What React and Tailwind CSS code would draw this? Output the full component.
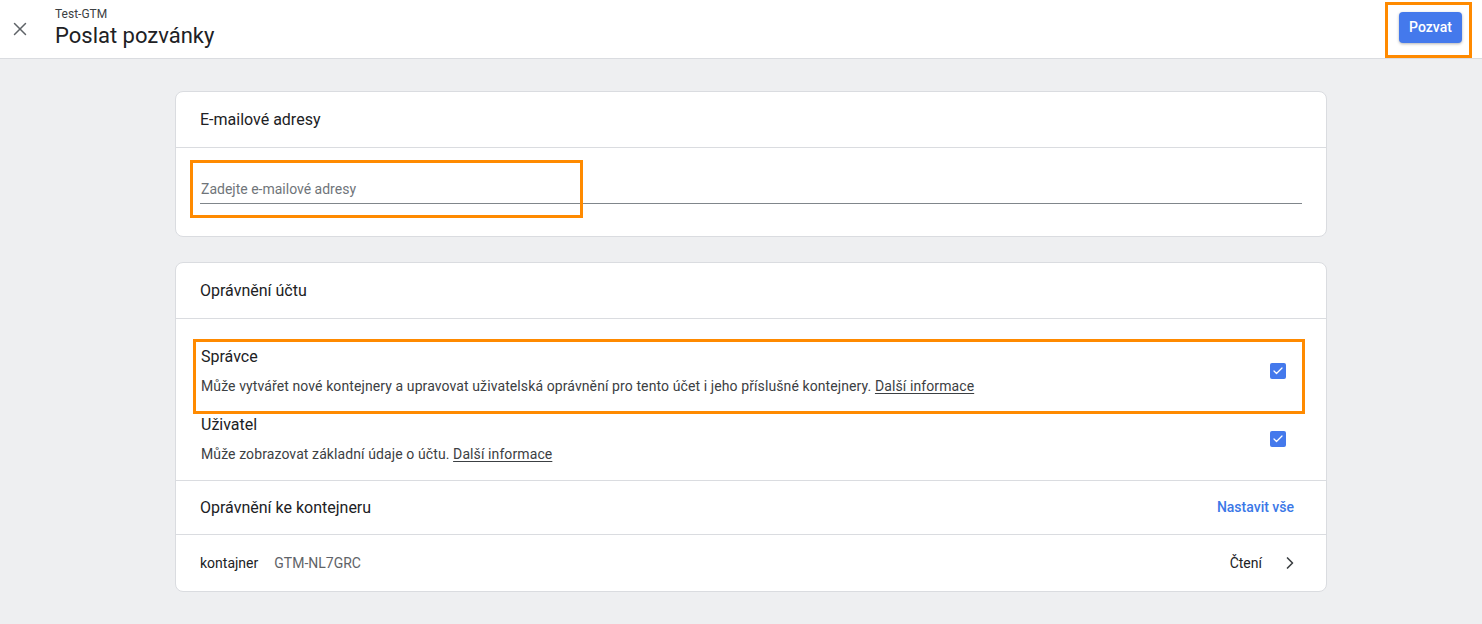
import { X, ChevronRight, Check } from "lucide-react";

const Checkbox = () => (
  <div className="w-4 h-4 rounded-[2px] bg-[#4479ec] flex items-center justify-center">
    <Check className="w-3 h-3 text-white" strokeWidth={2.5} />
  </div>
);

const Role = ({ title, desc, last }) => (
  <div className={`flex items-center pl-[25px] pr-[40px] ${last ? "pb-[16px]" : "pb-[17px]"}`}>
    <div className="flex-1">
      <div className="text-[16px] leading-6 text-[#202124]">{title}</div>
      <div className="mt-[7px] text-[14px] leading-5 text-[#3c4043] tracking-[0.1px]">
        {desc}{" "}
        <span className="underline underline-offset-2">Další informace</span>
      </div>
    </div>
    <Checkbox />
  </div>
);

const App = () => {
  return (
    <div
      className="relative w-[1482px] h-[624px] bg-[#eeeff1] overflow-hidden"
      style={{ fontFamily: "Roboto, 'Noto Sans', sans-serif" }}
    >
      {/* Header */}
      <div className="h-[59px] bg-white border-b border-[#dadce0] flex items-center pr-[20px]">
        <div className="w-[55px] flex justify-center">
          <X className="w-[22px] h-[22px] text-[#5f6368] ml-[-15px]" strokeWidth={1.6} />
        </div>
        <div className="flex-1 -mt-[2px]">
          <div className="text-[12px] leading-4 text-[#3c4043]">Test-GTM</div>
          <div className="text-[22px] leading-7 text-[#202124]">Poslat pozvánky</div>
        </div>
        <button className="h-[31px] w-[63px] rounded-[4px] bg-[#4479ec] text-white text-[14px] font-medium shadow-[0_1px_3px_rgba(0,0,0,0.3)] -mt-[4px]">
          Pozvat
        </button>
      </div>

      <div className="pt-[32px] pl-[175px]">
        {/* Email card */}
        <div className="w-[1152px] bg-white border border-[#dadce0] rounded-[8px]">
          <div className="h-[56px] flex items-center px-6 text-[16px] text-[#202124] border-b border-[#dadce0]">
            E-mailové adresy
          </div>
          <div className="pt-[27px] pb-[32px] px-[24px]">
            <div className="h-[29px] border-b border-[#80868b] flex items-center text-[14px] text-[#70757a] pl-px">
              Zadejte e-mailové adresy
            </div>
          </div>
        </div>

        {/* Permissions card */}
        <div className="mt-[25px] w-[1152px] bg-white border border-[#dadce0] rounded-[8px]">
          <div className="h-[56px] flex items-center px-6 text-[16px] text-[#202124] border-b border-[#dadce0]">
            Oprávnění účtu
          </div>
          <div className="pt-[26px] border-b border-[#dadce0]">
            <Role
              title="Správce"
              desc="Může vytvářet nové kontejnery a upravovat uživatelská oprávnění pro tento účet i jeho příslušné kontejnery."
            />
            <Role title="Uživatel" desc="Může zobrazovat základní údaje o účtu." last />
          </div>
          <div className="h-[54px] flex items-center justify-between pl-6 pr-[32px] border-b border-[#dadce0]">
            <span className="text-[16px] text-[#202124]">Oprávnění ke kontejneru</span>
            <span className="text-[14px] font-medium text-[#3b78e7]">Nastavit vše</span>
          </div>
          <div className="h-[56px] flex items-center pl-6 pr-[26px] text-[14px]">
            <span className="text-[#202124]">kontajner</span>
            <span className="ml-[16px] text-[#5f6368]">GTM-NL7GRC</span>
            <span className="ml-auto text-[#202124]">Čtení</span>
            <ChevronRight className="ml-[18px] w-[20px] h-[20px] text-[#3c4043]" strokeWidth={2} />
          </div>
        </div>
      </div>

      {/* Annotation boxes */}
      <div className="absolute left-[1385px] top-[2px] w-[87px] h-[56px] border-[3px] border-[#ff8a00]" />
      <div className="absolute left-[190px] top-[160px] w-[393px] h-[58px] border-[3px] border-[#ff8a00]" />
      <div className="absolute left-[193px] top-[339px] w-[1112px] h-[75px] border-[3px] border-[#ff8a00]" />
    </div>
  );
};

export default App;
